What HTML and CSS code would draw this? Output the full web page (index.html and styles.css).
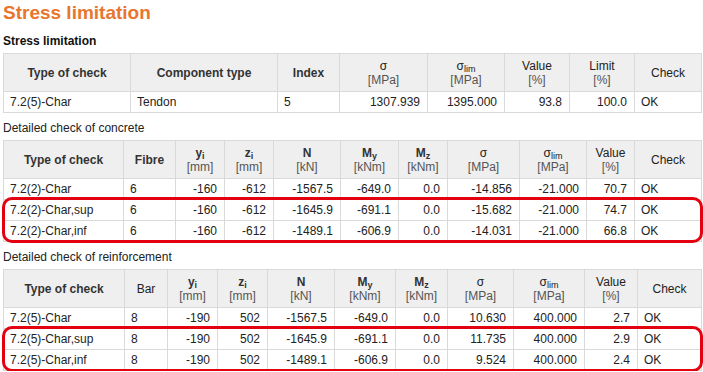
FILE: index.html
```html
<!DOCTYPE html>
<html lang="en">
<head>
<meta charset="utf-8">
<title>Stress limitation</title>
<link rel="stylesheet" href="styles.css">
</head>
<body>
<h1 class="title">Stress limitation</h1>

<h2 class="sub sub-bold">Stress limitation</h2>
<div class="tbl-wrap">
<table class="grid t1">
<colgroup><col><col><col><col><col><col><col><col></colgroup>
<thead>
<tr>
<th class="b">Type of check</th>
<th class="b">Component type</th>
<th class="b">Index</th>
<th>σ<br><span class="unit">[MPa]</span></th>
<th>σ<sub>lim</sub><br><span class="unit">[MPa]</span></th>
<th>Value<br><span class="unit">[%]</span></th>
<th>Limit<br><span class="unit">[%]</span></th>
<th>Check</th>
</tr>
</thead>
<tbody>
<tr><td>7.2(5)-Char</td><td>Tendon</td><td>5</td><td class="n">1307.939</td><td class="n">1395.000</td><td class="n">93.8</td><td class="n">100.0</td><td>OK</td></tr>
</tbody>
</table>
</div>

<h2 class="sub">Detailed check of concrete</h2>
<div class="tbl-wrap">
<table class="grid t2">
<colgroup><col><col><col><col><col><col><col><col><col><col><col></colgroup>
<thead>
<tr>
<th class="b">Type of check</th>
<th class="b">Fibre</th>
<th class="b">y<sub>i</sub><br><span class="unit">[mm]</span></th>
<th class="b">z<sub>i</sub><br><span class="unit">[mm]</span></th>
<th class="b">N<br><span class="unit">[kN]</span></th>
<th class="b">M<sub>y</sub><br><span class="unit">[kNm]</span></th>
<th class="b">M<sub>z</sub><br><span class="unit">[kNm]</span></th>
<th>σ<br><span class="unit">[MPa]</span></th>
<th>σ<sub>lim</sub><br><span class="unit">[MPa]</span></th>
<th>Value<br><span class="unit">[%]</span></th>
<th>Check</th>
</tr>
</thead>
<tbody>
<tr><td>7.2(2)-Char</td><td>6</td><td class="n">-160</td><td class="n">-612</td><td class="n">-1567.5</td><td class="n">-649.0</td><td class="n">0.0</td><td class="n">-14.856</td><td class="n">-21.000</td><td class="n">70.7</td><td>OK</td></tr>
<tr><td>7.2(2)-Char,sup</td><td>6</td><td class="n">-160</td><td class="n">-612</td><td class="n">-1645.9</td><td class="n">-691.1</td><td class="n">0.0</td><td class="n">-15.682</td><td class="n">-21.000</td><td class="n">74.7</td><td>OK</td></tr>
<tr><td>7.2(2)-Char,inf</td><td>6</td><td class="n">-160</td><td class="n">-612</td><td class="n">-1489.1</td><td class="n">-606.9</td><td class="n">0.0</td><td class="n">-14.031</td><td class="n">-21.000</td><td class="n">66.8</td><td>OK</td></tr>
</tbody>
</table>
<div class="highlight"></div>
</div>

<h2 class="sub">Detailed check of reinforcement</h2>
<div class="tbl-wrap">
<table class="grid t3">
<colgroup><col><col><col><col><col><col><col><col><col><col><col></colgroup>
<thead>
<tr>
<th class="b">Type of check</th>
<th>Bar</th>
<th class="b">y<sub>i</sub><br><span class="unit">[mm]</span></th>
<th class="b">z<sub>i</sub><br><span class="unit">[mm]</span></th>
<th class="b">N<br><span class="unit">[kN]</span></th>
<th class="b">M<sub>y</sub><br><span class="unit">[kNm]</span></th>
<th class="b">M<sub>z</sub><br><span class="unit">[kNm]</span></th>
<th>σ<br><span class="unit">[MPa]</span></th>
<th>σ<sub>lim</sub><br><span class="unit">[MPa]</span></th>
<th>Value<br><span class="unit">[%]</span></th>
<th>Check</th>
</tr>
</thead>
<tbody>
<tr><td>7.2(5)-Char</td><td>8</td><td class="n">-190</td><td class="n">502</td><td class="n">-1567.5</td><td class="n">-649.0</td><td class="n">0.0</td><td class="n">10.630</td><td class="n">400.000</td><td class="n">2.7</td><td>OK</td></tr>
<tr><td>7.2(5)-Char,sup</td><td>8</td><td class="n">-190</td><td class="n">502</td><td class="n">-1645.9</td><td class="n">-691.1</td><td class="n">0.0</td><td class="n">11.735</td><td class="n">400.000</td><td class="n">2.9</td><td>OK</td></tr>
<tr><td>7.2(5)-Char,inf</td><td>8</td><td class="n">-190</td><td class="n">502</td><td class="n">-1489.1</td><td class="n">-606.9</td><td class="n">0.0</td><td class="n">9.524</td><td class="n">400.000</td><td class="n">2.4</td><td>OK</td></tr>
</tbody>
</table>
<div class="highlight"></div>
</div>
</body>
</html>
```
FILE: styles.css
```css
html, body {
  margin: 0;
  background: #ffffff;
}
body {
  padding: 0 3px;
  font-family: "Liberation Sans", Arial, sans-serif;
  font-size: 12px;
  color: #222222;
}
.title {
  margin: 0;
  font-size: 19px;
  line-height: 26px;
  font-weight: bold;
  color: #e8762d;
}
.sub {
  margin: 8px 0 5px;
  font-size: 12px;
  line-height: 14px;
  font-weight: normal;
  color: #222222;
}
.sub-bold {
  margin-top: 8px;
  margin-bottom: 5px;
  font-weight: bold;
  color: #111111;
}
.tbl-wrap {
  position: relative;
  width: 699px;
}
.grid {
  width: 699px;
  table-layout: fixed;
  border-collapse: collapse;
}
.grid th,
.grid td {
  border: 1px solid #d9d9d9;
  white-space: nowrap;
  overflow: hidden;
}
.grid th {
  background: #efefef;
  padding: 5px 4px 4px;
  line-height: 14px;
  font-weight: normal;
  text-align: center;
  color: #222222;
}
.grid th.b {
  font-weight: bold;
  color: #333333;
}
.grid td {
  padding: 3px 7px 3px 6px;
  line-height: 14px;
  text-align: left;
}
.grid td.n {
  text-align: right;
}
.unit {
  font-size: 12px;
  font-weight: normal;
  color: #555555;
}
sub {
  font-size: 9px;
  line-height: 0;
  vertical-align: -2px;
}
.t1 col:nth-child(1) { width: 127px; }
.t1 col:nth-child(2) { width: 147px; }
.t1 col:nth-child(3) { width: 62px; }
.t1 col:nth-child(4) { width: 88px; }
.t1 col:nth-child(5) { width: 77px; }
.t1 col:nth-child(6) { width: 65px; }
.t1 col:nth-child(7) { width: 65px; }
.t1 col:nth-child(8) { width: 67px; }

.t2 col:nth-child(1) { width: 120px; }
.t2 col:nth-child(2) { width: 52px; }
.t2 col:nth-child(3) { width: 49px; }
.t2 col:nth-child(4) { width: 49px; }
.t2 col:nth-child(5) { width: 67px; }
.t2 col:nth-child(6) { width: 58px; }
.t2 col:nth-child(7) { width: 49px; }
.t2 col:nth-child(8) { width: 72px; }
.t2 col:nth-child(9) { width: 67px; }
.t2 col:nth-child(10) { width: 48px; }
.t2 col:nth-child(11) { width: 67px; }

.t3 col:nth-child(1) { width: 121px; }
.t3 col:nth-child(2) { width: 43px; }
.t3 col:nth-child(3) { width: 50px; }
.t3 col:nth-child(4) { width: 50px; }
.t3 col:nth-child(5) { width: 67px; }
.t3 col:nth-child(6) { width: 61px; }
.t3 col:nth-child(7) { width: 52px; }
.t3 col:nth-child(8) { width: 66px; }
.t3 col:nth-child(9) { width: 71px; }
.t3 col:nth-child(10) { width: 53px; }
.t3 col:nth-child(11) { width: 64px; }

.highlight {
  position: absolute;
  left: -1px;
  right: -1px;
  top: 57px;
  height: 46px;
  box-sizing: border-box;
  border: 3px solid #e3000f;
  border-radius: 10px;
  pointer-events: none;
}
```
